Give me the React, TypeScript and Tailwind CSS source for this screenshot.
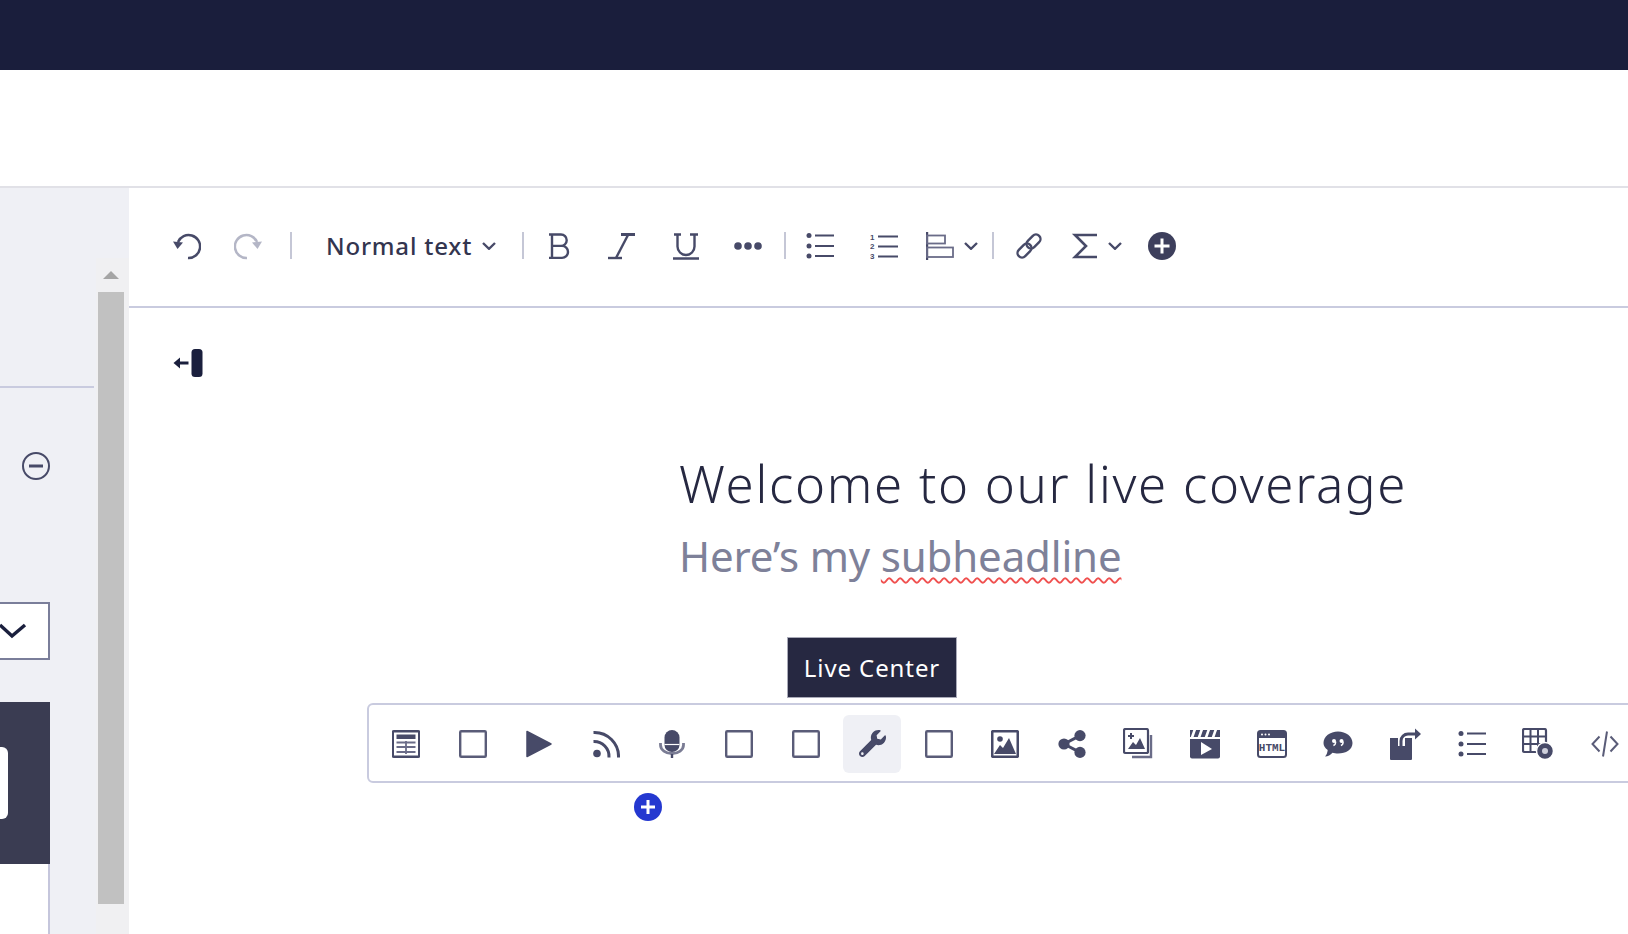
import React from "react";
import { FaWrench } from "react-icons/fa";

const INK = "#474a68";

function Ico({ children, className = "" }: { children: React.ReactNode; className?: string }) {
  return (
    <svg viewBox="0 0 28 28" className={"w-[28px] h-[28px] shrink-0 " + className} fill="none" stroke={INK} strokeWidth={2.4}>
      {children}
    </svg>
  );
}

function Chevron({ w = 14, h = 8, sw = 2.4, color = INK }: { w?: number; h?: number; sw?: number; color?: string }) {
  return (
    <svg width={w} height={h} viewBox={`0 0 ${w} ${h}`} fill="none" stroke={color} strokeWidth={sw} className="shrink-0">
      <path d={`M1 1 L${w / 2} ${h - 1.2} L${w - 1} 1`} />
    </svg>
  );
}

const Undo = ({ color = INK }: { color?: string }) => (
  <svg viewBox="0 0 28 28" className="w-[28px] h-[28px] shrink-0" fill="none" stroke={color} strokeWidth={2.5}>
    <path d="M5 10 A11.5 11.5 0 1 1 15 26" />
    <path d="M0 9.5 L10 10.5 L4.5 17 Z" fill={color} stroke="none" />
  </svg>
);

const Redo = ({ color = "#b4b6c6" }: { color?: string }) => (
  <svg viewBox="0 0 28 28" className="w-[28px] h-[28px] shrink-0 -scale-x-100" fill="none" stroke={color} strokeWidth={2.5}>
    <path d="M5 10 A11.5 11.5 0 1 1 15 26" />
    <path d="M0 9.5 L10 10.5 L4.5 17 Z" fill={color} stroke="none" />
  </svg>
);

const Bullets = () => (
  <Ico>
    <circle cx="3" cy="3.5" r="2.5" fill={INK} stroke="none" />
    <circle cx="3" cy="14" r="2.5" fill={INK} stroke="none" />
    <circle cx="3" cy="24" r="2.5" fill={INK} stroke="none" />
    <path d="M9 3.5H28M9 14H28M9 24H28" strokeWidth={2} />
  </Ico>
);

const Square = () => (
  <svg viewBox="0 0 28 28" className="w-[28px] h-[28px] shrink-0" fill="none" stroke="#5a5c78" strokeWidth={2.4}>
    <rect x="1.2" y="1.2" width="25.6" height="25.6" rx="1" />
  </svg>
);

const icons: React.ReactNode[] = [
  <Ico key="table">
    <rect x="0.8" y="1.2" width="26.4" height="25.6" rx="1" />
    <rect x="4.5" y="4.5" width="19" height="4.5" fill={INK} stroke="none" />
    <path d="M4.5 12.5H23.5M4.5 17H23.5M4.5 22H23.5M14 11V24" strokeWidth={1.8} stroke="#6a6c88" />
  </Ico>,
  <Square key="s1" />,
  <Ico key="play">
    <path d="M2 1.5 L26 14 L2 26.5 Z" fill={INK} stroke={INK} strokeWidth={1.5} strokeLinejoin="round" />
  </Ico>,
  <Ico key="rss">
    <circle cx="5" cy="23.5" r="3.8" fill={INK} stroke="none" />
    <path d="M1.5 11.5 A15 15 0 0 1 17 27.5" strokeWidth={3} />
    <path d="M1.5 2.5 A24 24 0 0 1 26.5 27.5" strokeWidth={3} />
  </Ico>,
  <Ico key="mic">
    <path d="M6.5 7.5 a7.5 7.5 0 0 1 15 0 V15 a7.5 7 0 0 1 -15 0 Z" fill={INK} stroke="none" />
    <path d="M2.5 13 v2 a11.5 8.5 0 0 0 23 0 v-2" strokeWidth={2.8} stroke="#7a7c94" />
    <path d="M14 24V28" strokeWidth={2.4} />
    <path d="M6.5 14.5H21.5" stroke="#ffffff" strokeWidth={1.2} />
  </Ico>,
  <Square key="s2" />,
  <Square key="s3" />,
  <FaWrench key="wrench" size={27} color={INK} className="-scale-x-100 rotate-90" />,
  <Square key="s4" />,
  <Ico key="image">
    <rect x="1.2" y="1.2" width="25.6" height="25.6" rx="1" strokeWidth={2.6} />
    <circle cx="9" cy="9" r="2.8" fill={INK} stroke="none" />
    <path d="M3 24 L9 15 L12 18 L18 8 L25 24 Z" fill={INK} stroke="none" />
  </Ico>,
  <Ico key="share">
    <circle cx="6" cy="14" r="5.6" fill={INK} stroke="none" />
    <circle cx="22" cy="5.6" r="5.6" fill={INK} stroke="none" />
    <circle cx="22" cy="22.4" r="5.6" fill={INK} stroke="none" />
    <path d="M6 14 L22 5.6M6 14 L22 22.4" strokeWidth={3} />
  </Ico>,
  <svg key="gallery" viewBox="0 0 32 32" className="w-[32px] h-[32px] shrink-0" fill="none" stroke={INK} strokeWidth={2}>
    <rect x="1" y="1" width="24" height="24" rx="1.5" strokeWidth={2.2} />
    <path d="M28 7 V29 H9" strokeWidth={2.4} stroke="#6a6c88" />
    <path d="M5 21 L10 14 L13 17 L17 10 L22 21 Z" fill={INK} stroke="none" />
    <path d="M5 8H11M8 5V11" strokeWidth={2} />
  </svg>,
  <svg key="clapper" viewBox="0 0 32 30" className="w-[32px] h-[30px] shrink-0" fill="none">
    <path d="M1 1 H31 V8 H1 Z" fill={INK} />
    <path d="M6 0 L3 8.5 M13 0 L10 8.5 M20 0 L17 8.5 M27 0 L24 8.5" stroke="#ffffff" strokeWidth={2.6} />
    <path d="M1 10 H31 V27.5 a2 2 0 0 1 -2 2 H3 a2 2 0 0 1 -2 -2 Z" fill={INK} />
    <path d="M12 13 L23 20 L12 26 Z" fill="#ffffff" />
  </svg>,
  <svg key="html" viewBox="0 0 30 28" className="w-[30px] h-[28px] shrink-0" fill="none">
    <rect x="1" y="1" width="28" height="26" rx="2.5" stroke={INK} strokeWidth={2} />
    <path d="M1 3.5 a2.5 2.5 0 0 1 2.5 -2.5 H26.5 a2.5 2.5 0 0 1 2.5 2.5 V8 H1 Z" fill={INK} />
    <circle cx="5" cy="4.5" r="1" fill="#fff" />
    <circle cx="8.5" cy="4.5" r="1" fill="#fff" />
    <circle cx="12" cy="4.5" r="1" fill="#fff" />
    <text x="15" y="21" textAnchor="middle" fontSize="11" fontWeight="700" fill={INK} fontFamily="'Liberation Mono', monospace">HTML</text>
  </svg>,
  <svg key="quote" viewBox="0 0 30 26" className="w-[30px] h-[26px] shrink-0">
    <path d="M15 0.5 C23 0.5 29.5 5.5 29.5 12 C29.5 18.5 23 22.5 15 22.5 C13 22.5 11 22.2 9.5 21.8 C7.5 24 5 25.5 2 25.5 C3.5 24 4.5 21.5 4.7 19 C2 17 0.5 14.8 0.5 12 C0.5 5.5 7 0.5 15 0.5 Z" fill={INK} />
    <circle cx="11" cy="10" r="2" fill="#fff" />
    <circle cx="18.5" cy="10" r="2" fill="#fff" />
    <path d="M12.6 10.5 C12.8 12.5 11.6 14 10.4 14.5M20.1 10.5 C20.3 12.5 19.1 14 17.9 14.5" stroke="#fff" strokeWidth={1.4} fill="none" />
  </svg>,
  <svg key="export" viewBox="0 0 32 32" className="w-[32px] h-[32px] shrink-0" fill="none">
    <path d="M1 10 H9 V18 H16 V10 H23 V31 a1 1 0 0 1 -1 1 H2 a1 1 0 0 1 -1 -1 Z" fill={INK} />
    <path d="M12 20 V13 A7 7 0 0 1 19 6 H27" stroke={INK} strokeWidth={3} />
    <path d="M26 0.5 L32 6 L26 11.5 Z" fill={INK} />
  </svg>,
  <Bullets key="list" />,
  <svg key="tableplus" viewBox="0 0 32 32" className="w-[32px] h-[32px] shrink-0" fill="none" stroke={INK} strokeWidth={2}>
    <rect x="1" y="1" width="23" height="23" rx="1.5" strokeWidth={2.2} />
    <path d="M1 8.5H24M1 16H24M8.5 1V24M16 1V24" />
    <circle cx="23" cy="23" r="8.5" fill={INK} stroke="#ffffff" strokeWidth={1.5} />
    <circle cx="23" cy="23" r="3" fill="#cfd0dc" stroke="none" />
  </svg>,
  <svg key="code" viewBox="0 0 28 28" className="w-[28px] h-[28px] shrink-0" fill="none" stroke="#5a5c78" strokeWidth={2}>
    <path d="M8.5 6.5 L1.5 14 L8.5 21.5M19.5 6.5 L26.5 14 L19.5 21.5M16 1.5 L12 26.5" />
  </svg>,
];

const Divider = ({ className }: { className: string }) => <div className={"w-[2px] h-[27px] bg-[#c5c7d6] shrink-0 " + className} />;

export default function App() {
  return (
    <div className="w-[1628px] h-[934px] overflow-hidden bg-white flex flex-col font-['Noto_Sans',sans-serif]">
      <div className="h-[70px] shrink-0 bg-[#1a1e3c]" />
      <div className="h-[118px] shrink-0 bg-white border-b-2 border-[#e1e1e7]" />
      <div className="flex flex-1 min-h-0">
        {/* left panel */}
        <aside className="w-[129px] shrink-0 bg-[#eff0f5] flex">
          <div className="w-[96px] shrink-0 flex flex-col">
            <div className="h-[200px] shrink-0 mr-[2px] border-b-2 border-[#c9cbdf]" />
            <div className="pl-[22px] mt-[64px]">
              <svg width="28" height="28" viewBox="0 0 28 28" fill="none" stroke="#474a68" strokeWidth={2}>
                <circle cx="14" cy="14" r="13" />
                <path d="M7 14H21" strokeWidth={3} />
              </svg>
            </div>
            <div className="mt-[122px] w-[50px] h-[58px] bg-white border-y-2 border-r-2 border-[#7a7e9a] flex items-center">
              <svg width="28" height="16" viewBox="0 0 28 16" fill="none" stroke="#1a1f3d" strokeWidth={3.5} className="ml-[-1px]">
                <path d="M1 2 L13 13 L26 2" />
              </svg>
            </div>
            <div className="mt-[42px] w-[50px] h-[162px] bg-[#3a3c52] flex items-center">
              <div className="w-[8px] h-[72px] bg-white rounded-r-[6px]" />
            </div>
            <div className="w-[50px] flex-1 bg-white border-r-2 border-[#c5c6dc]" />
          </div>
          <div className="flex-1 flex flex-col mt-[70px] bg-[#f0f0f2] pl-[2px] pr-[5px]">
            <div className="h-[34px] shrink-0 flex items-center justify-center">
              <div className="w-0 h-0 border-x-[8px] border-x-transparent border-b-[8px] border-b-[#a5a5a5]" />
            </div>
            <div className="h-[612px] bg-[#c1c1c1]" />
          </div>
        </aside>

        {/* editor */}
        <main className="flex-1 min-w-0 flex flex-col">
          <div className="h-[120px] shrink-0 border-b-2 border-[#c9cbdf] flex items-center pb-[3px]">
            <div className="ml-[44px]"><Undo /></div>
            <div className="ml-[33px]"><Redo /></div>
            <Divider className="ml-[28px]" />
            <span className="ml-[34px] text-[24px] font-medium text-[#33354f] tracking-[0.8px] leading-none">Normal text</span>
            <span className="ml-[10px]"><Chevron /></span>
            <Divider className="ml-[26px]" />
            <div className="ml-[22px]">
              <Ico>
                <path d="M3 2.5H15a5.7 5.7 0 0 1 0 11.4H6M6 13.9H16a6 6 0 0 1 0 12H3M6 2.5V25.9" />
              </Ico>
            </div>
            <div className="ml-[33px]">
              <Ico>
                <path d="M21 3 L9 26" />
                <path d="M14 2.5H28" strokeWidth={3} />
                <path d="M1 26H15" />
              </Ico>
            </div>
            <div className="ml-[37px]">
              <Ico>
                <path d="M2 2.5H9M18 2.5H26M5.5 2.5V14.5a8.5 8.5 0 0 0 17 0V2.5M1 26.5H27" />
              </Ico>
            </div>
            <div className="ml-[34px]">
              <Ico>
                <circle cx="4" cy="14" r="3.8" fill={INK} stroke="none" />
                <circle cx="14" cy="14" r="3.8" fill={INK} stroke="none" />
                <circle cx="24" cy="14" r="3.8" fill={INK} stroke="none" />
              </Ico>
            </div>
            <Divider className="ml-[22px]" />
            <div className="ml-[20px]"><Bullets /></div>
            <div className="ml-[36px]">
              <Ico>
                <text x="0" y="7.5" fontSize="8" fontWeight="700" fill={INK} stroke="none" fontFamily="'Liberation Sans', sans-serif">1</text>
                <text x="0" y="17" fontSize="8" fontWeight="700" fill={INK} stroke="none" fontFamily="'Liberation Sans', sans-serif">2</text>
                <text x="0" y="26.5" fontSize="8" fontWeight="700" fill={INK} stroke="none" fontFamily="'Liberation Sans', sans-serif">3</text>
                <path d="M8 4.5H28M8 14.5H28M8 24.5H28" strokeWidth={2} />
              </Ico>
            </div>
            <div className="ml-[28px]">
              <Ico>
                <path d="M1 0V28" />
                <rect x="1" y="3.5" width="18" height="8" strokeWidth={1.8} stroke="#6a6c88" />
                <rect x="1" y="15.5" width="26" height="9.5" strokeWidth={1.8} stroke="#6a6c88" />
              </Ico>
            </div>
            <span className="ml-[10px]"><Chevron /></span>
            <Divider className="ml-[14px]" />
            <div className="ml-[21px]">
              <Ico>
                <rect x="10.5" y="5" width="16" height="9" rx="4.5" transform="rotate(-45 18.5 9.5)" strokeWidth={2.4} />
                <rect x="1.5" y="14" width="16" height="9" rx="4.5" transform="rotate(-45 9.5 18.5)" strokeWidth={2.4} />
              </Ico>
            </div>
            <div className="ml-[28px]">
              <Ico>
                <path d="M26 3 H4 L15 14 L4 25 H26" strokeWidth={2.6} />
              </Ico>
            </div>
            <span className="ml-[9px]"><Chevron /></span>
            <div className="ml-[26px]">
              <svg width="28" height="28" viewBox="0 0 28 28" className="shrink-0">
                <circle cx="14" cy="14" r="14" fill="#3d3f5c" />
                <path d="M14 6.5V21.5M6.5 14H21.5" stroke="#fff" strokeWidth={3} />
              </svg>
            </div>
          </div>

          <div className="flex-1 min-h-0 flex flex-col">
            <div className="ml-[44px] mt-[41px] h-[28px]">
              <svg width="30" height="28" viewBox="0 0 30 28">
                <rect x="18.5" y="0" width="11" height="28" rx="3.5" fill="#1a1f3d" />
                <path d="M15.5 14H5" stroke="#1a1f3d" strokeWidth={3} />
                <path d="M0.5 14 L7 8.5 V19.5 Z" fill="#1a1f3d" />
              </svg>
            </div>
            <h1 className="ml-[550px] mt-[76px] text-[51px] leading-[60px] font-light tracking-[1.7px] text-[#262841] whitespace-nowrap">Welcome to our live coverage</h1>
            <p className="ml-[550px] mt-[18px] text-[42px] leading-[50px] font-normal tracking-[-0.15px] text-[#7e8199] whitespace-nowrap">
              Here’s my <span className="underline decoration-wavy decoration-[#f0504f] decoration-[2px] underline-offset-[5px]">subheadline</span>
            </p>
            <div className="relative ml-[238px] mt-[122px] h-[80px] shrink-0 w-[1400px] border-2 border-[#c9cbdf] rounded-[6px] bg-white flex items-center pl-[8px] pt-[1px] gap-[8.6px]">
              <div className="absolute left-[418px] bottom-[83px] w-[170px] h-[61px] bg-[#262841] border border-[#a9aab8] flex items-center justify-center text-white text-[24px] tracking-[0.9px] whitespace-nowrap">
                Live Center
              </div>
              {icons.map((ic, i) => (
                <div key={i} className={"w-[58px] h-[58px] shrink-0 rounded-[6px] flex items-center justify-center " + (i === 7 ? "bg-[#eff0f5]" : "")}>
                  {ic}
                </div>
              ))}
              <div className="absolute left-[265px] top-[88px] w-[28px] h-[28px]">
                <svg width="28" height="28" viewBox="0 0 28 28">
                  <circle cx="14" cy="14" r="14" fill="#2438d0" />
                  <path d="M14 7V21M7 14H21" stroke="#fff" strokeWidth={3} />
                </svg>
              </div>
            </div>
          </div>
        </main>
      </div>
    </div>
  );
}
